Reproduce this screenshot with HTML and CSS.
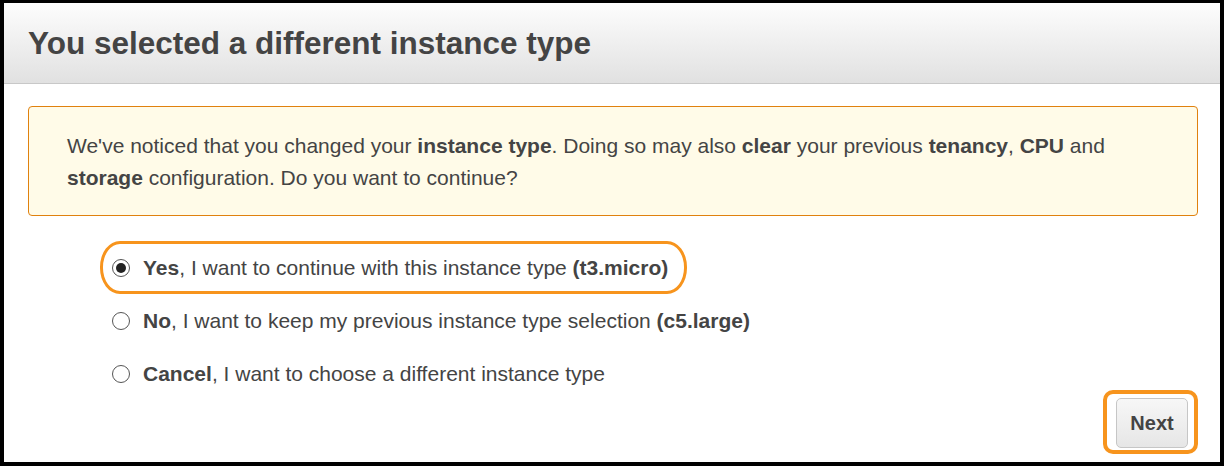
FILE: index.html
```html
<!DOCTYPE html>
<html>
<head>
<meta charset="utf-8">
<link rel="stylesheet" href="styles.css">
</head>
<body>
<div class="frame">
  <div class="dialog">
    <div class="header"><h1 class="title">You selected a different instance type</h1></div>
    <div class="content">
      <div class="alert">
        <p>We've noticed that you changed your <b>instance type</b>. Doing so may also <b>clear</b> your previous <b>tenancy</b>, <b>CPU</b> and <b>storage</b> configuration. Do you want to continue?</p>
      </div>
      <div class="options">
        <label class="option highlighted"><span class="radio checked"></span><span><b>Yes</b>, I want to continue with this instance type <b>(t3.micro)</b></span></label>
        <label class="option"><span class="radio"></span><span><b>No</b>, I want to keep my previous instance type selection <b>(c5.large)</b></span></label>
        <label class="option"><span class="radio"></span><span><b>Cancel</b>, I want to choose a different instance type</span></label>
      </div>
      <div class="footer">
        <button class="next">Next</button>
      </div>
    </div>
  </div>
</div>
</body>
</html>
```
FILE: styles.css
```css
html, body {
  margin: 0;
  padding: 0;
  background: #000;
}
.frame {
  width: 1224px;
  height: 466px;
  padding: 3px 4px 4px 4px;
  box-sizing: border-box;
}
.dialog {
  background: #fff;
  height: 100%;
  font-family: "Liberation Sans", Arial, sans-serif;
  color: #444;
}
.header {
  height: 80px;
  background: linear-gradient(#fdfdfd, #e1e1e1);
  border-bottom: 1px solid #c8c8c8;
  box-sizing: content-box;
  display: flex;
  align-items: center;
  padding-left: 24px;
}
.title {
  margin: 0;
  font-size: 31.5px;
  font-weight: bold;
  color: #444;
  position: relative;
  top: 0;
}
.content {
  padding: 22px 22px 0 24px;
}
.alert {
  background: #fffbe8;
  border: 1px solid #e0810e;
  border-radius: 4px;
  padding: 23px 38px 21px 38px;
}
.alert p {
  margin: 0;
  font-size: 21px;
  line-height: 32px;
}
.options {
  display: flex;
  flex-direction: column;
  padding: 31px 0 0 84px;
  gap: 11px;
}
.option {
  position: relative;
  display: flex;
  align-items: center;
  gap: 13px;
  font-size: 21px;
  height: 42px;
}
.radio {
  width: 18px;
  height: 18px;
  border: 1px solid #555;
  border-radius: 50%;
  box-sizing: border-box;
  display: inline-flex;
  align-items: center;
  justify-content: center;
  background: #fff;
  flex: none;
}
.radio.checked::after {
  content: "";
  width: 10px;
  height: 10px;
  border-radius: 50%;
  background: #222;
}
.highlighted::before {
  content: "";
  position: absolute;
  left: -12px;
  top: -6px;
  width: 587px;
  height: 53px;
  box-sizing: border-box;
  border: 3px solid #f7941d;
  border-radius: 20px / 26px;
}
.footer {
  display: flex;
  justify-content: flex-end;
  padding-right: 10px;
  margin-top: 3px;
}
.next {
  position: relative;
  width: 72px;
  height: 50px;
  font-family: "Liberation Sans", Arial, sans-serif;
  font-weight: bold;
  font-size: 20px;
  color: #444;
  background: linear-gradient(#f7f7f7, #e6e6e6);
  border: 1px solid #c6c6c6;
  border-radius: 5px;
  padding: 0;
}
.next::before {
  content: "";
  position: absolute;
  left: -14px;
  top: -9px;
  width: 95px;
  height: 64px;
  box-sizing: border-box;
  border: 4px solid #f7941d;
  border-radius: 10px;
}
```
